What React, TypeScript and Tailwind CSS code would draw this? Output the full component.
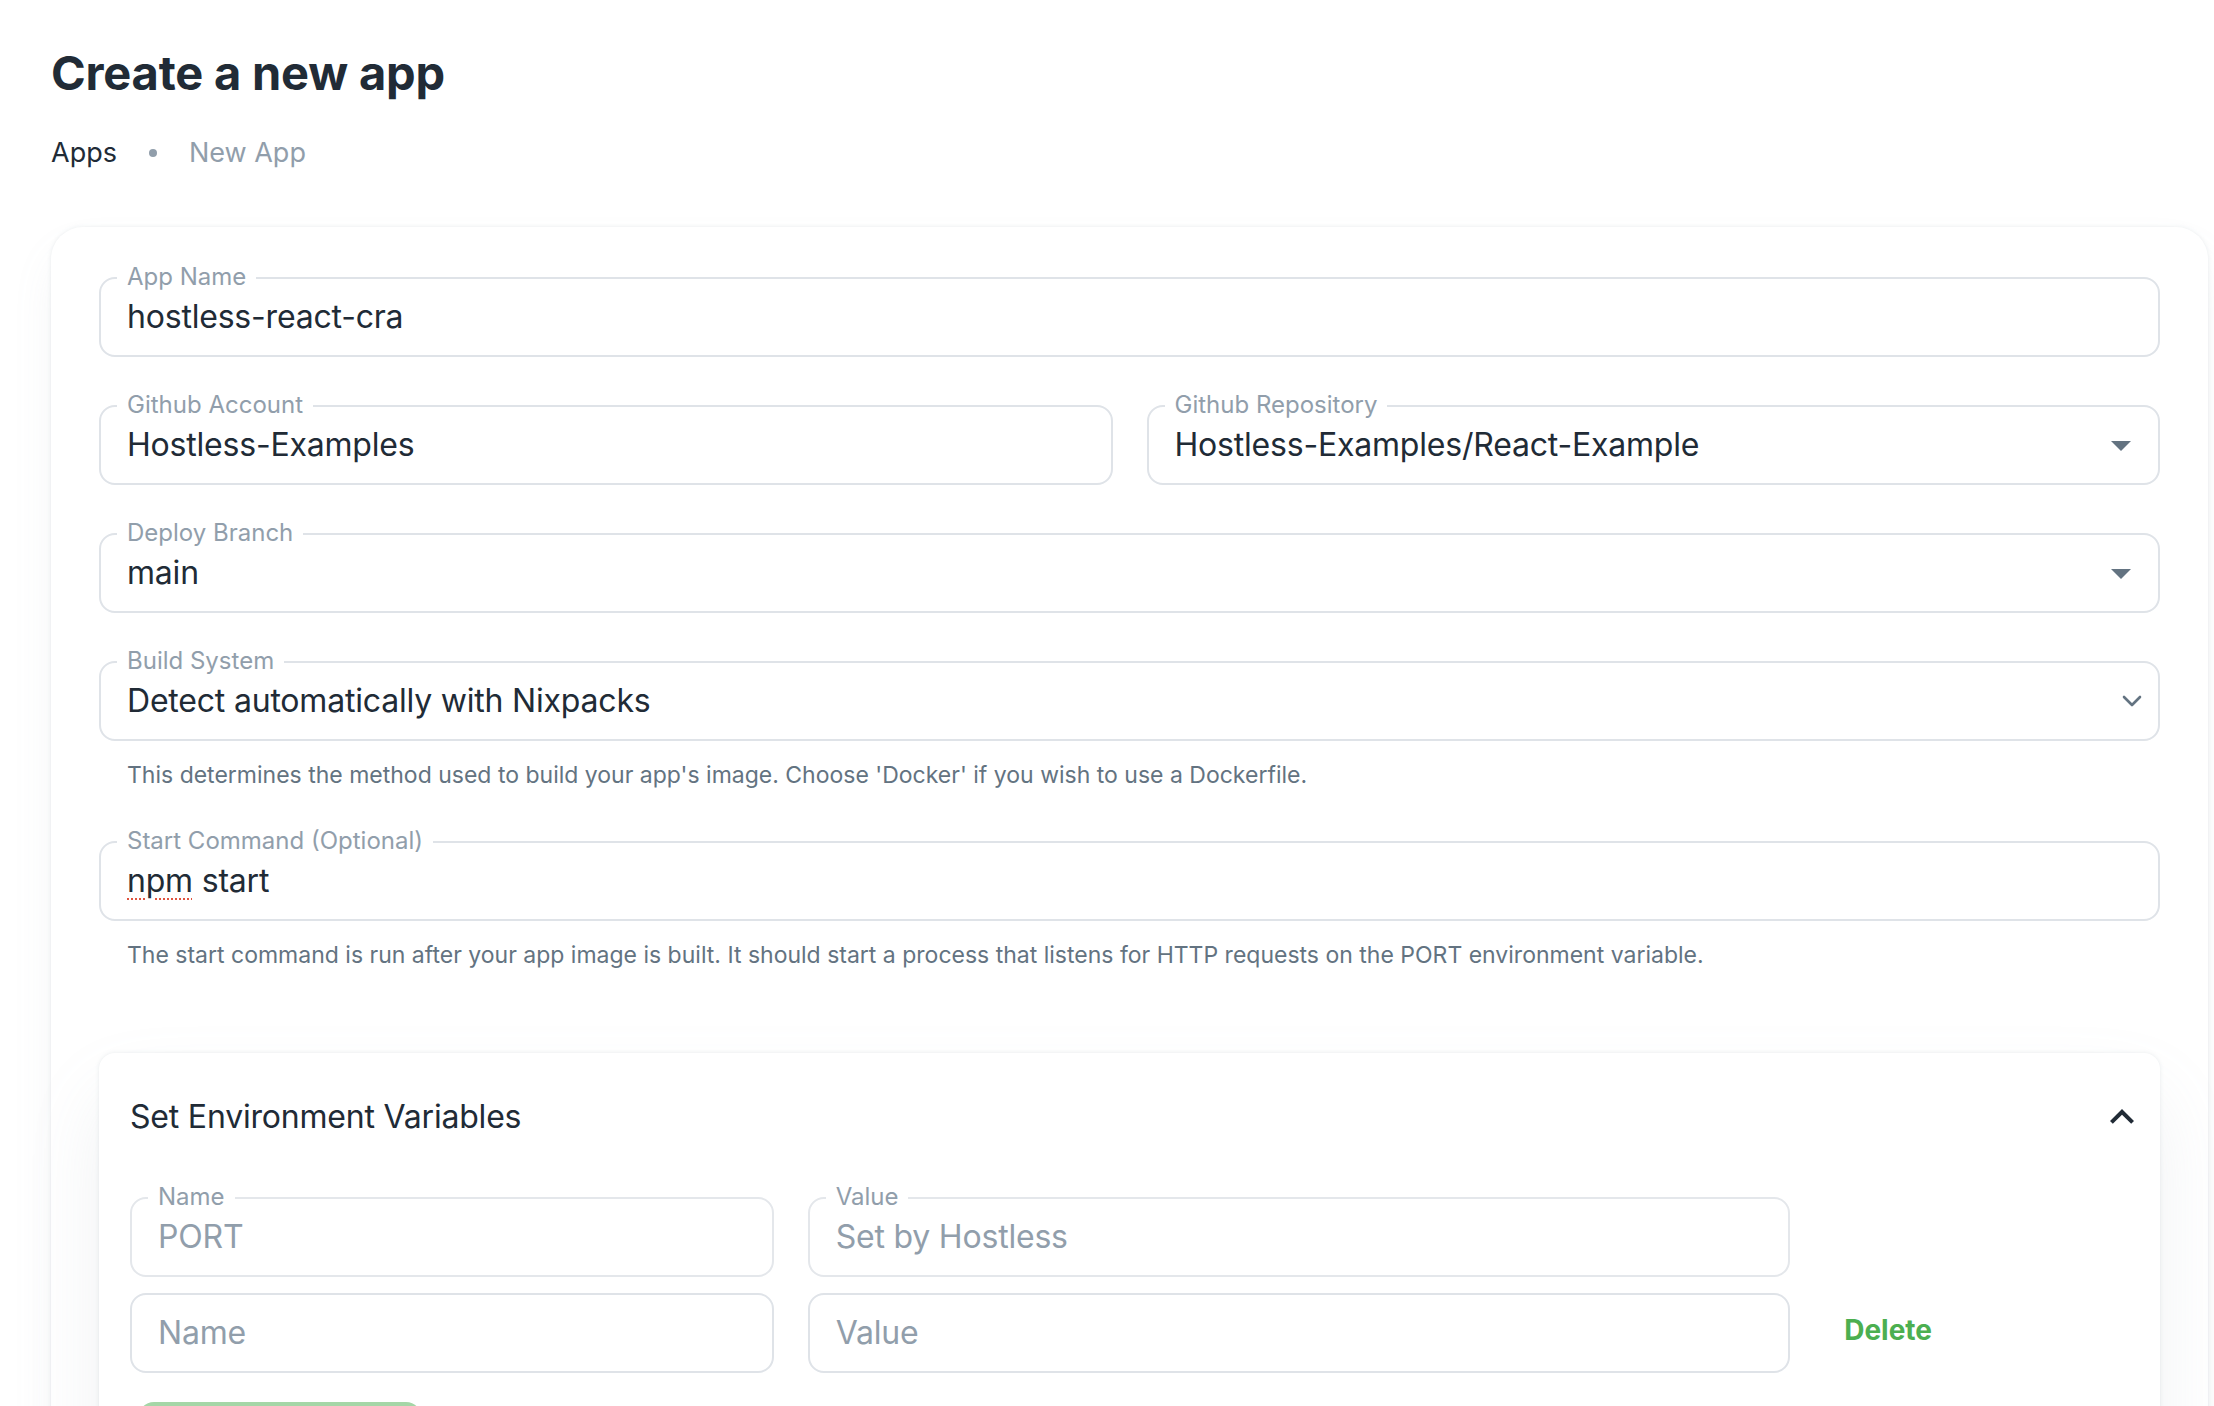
import type { ReactNode } from 'react'

function Field({
  label,
  children,
  right,
  disabled,
}: {
  label?: string
  children: ReactNode
  right?: ReactNode
  disabled?: boolean
}) {
  return (
    <div
      className={`relative flex h-[80px] items-center rounded-[16px] border-2 pl-[26px] ${
        disabled ? 'border-[#e4e7eb]' : 'border-[#dfe3e8]'
      }`}
    >
      {label && (
        <span className="absolute -top-[14px] left-[16px] bg-white px-[10px] text-[24px] leading-[24px] text-[#919eab]">
          {label}
        </span>
      )}
      <div className="min-w-0 flex-1 truncate text-[32px] leading-[48px] tracking-[-0.2px]">{children}</div>
      {right}
    </div>
  )
}

function DropArrow() {
  return (
    <svg width="48" height="48" viewBox="0 0 24 24" className="mr-[13px] shrink-0 fill-[#637381]">
      <path d="M7 10l5 5 5-5z" />
    </svg>
  )
}

function ChevronDown() {
  return (
    <svg width="20" height="12" viewBox="0 0 20 12" className="mr-[16px] shrink-0" fill="none">
      <polyline points="2,2 10,10 18,2" stroke="#637381" strokeWidth="2.6" strokeLinecap="round" strokeLinejoin="round" />
    </svg>
  )
}

export default function App() {
  return (
    <div className="min-h-screen bg-white pl-[51px] pr-[6px] pt-[45px] font-['Inter',sans-serif] text-[#212b36]">
      {/* Header */}
      <h1 className="text-[47px] font-bold leading-[56px] tracking-[-0.2px]">Create a new app</h1>
      <div className="mt-[32px] flex items-center gap-[32px] text-[27px] leading-[40px]">
        <span>Apps</span>
        <span className="h-[8px] w-[8px] rounded-full bg-[#919eab]" />
        <span className="text-[#919eab]">New App</span>
      </div>

      {/* Form card */}
      <div className="mt-[54px] rounded-[32px] bg-white px-[48px] pt-[50px] pb-[48px] shadow-[0_0_4px_0_rgba(145,158,171,0.2),0_24px_48px_-8px_rgba(145,158,171,0.12)]">
        <div className="flex flex-col gap-[48px]">
          <Field label="App Name">hostless-react-cra</Field>

          <div className="grid grid-cols-2 gap-x-[34px]">
            <Field label="Github Account">Hostless-Examples</Field>
            <Field label="Github Repository" right={<DropArrow />}>
              Hostless-Examples/React-Example
            </Field>
          </div>

          <Field label="Deploy Branch" right={<DropArrow />}>
            main
          </Field>

          <div>
            <Field label="Build System" right={<ChevronDown />}>
              Detect automatically with Nixpacks
            </Field>
            <p className="mt-[16px] pl-[28px] text-[23px] leading-[36px] text-[#637381]">
              This determines the method used to build your app's image. Choose 'Docker' if you wish to use a Dockerfile.
            </p>
          </div>

          <div>
            <Field label="Start Command (Optional)">
              <span className="underline decoration-[#e0533f] decoration-dotted decoration-2 underline-offset-[6px]">npm</span> start
            </Field>
            <p className="mt-[16px] pl-[28px] text-[23px] leading-[36px] text-[#637381]">
              The start command is run after your app image is built. It should start a process that listens for HTTP requests on the PORT environment variable.
            </p>
          </div>
        </div>

        {/* Environment variables */}
        <div className="mt-[80px] rounded-[16px] bg-white shadow-[0_0_4px_0_rgba(145,158,171,0.2),0_40px_80px_-8px_rgba(145,158,171,0.16)]">
          <div className="flex h-[128px] items-center justify-between pl-[31px] pr-[14px]">
            <span className="text-[32px] leading-[48px] tracking-[-0.2px]">Set Environment Variables</span>
            <svg width="48" height="48" viewBox="0 0 24 24" className="fill-[#212b36]">
              <path d="M12 8l-6 6 1.41 1.41L12 10.83l4.59 4.58L18 14z" />
            </svg>
          </div>

          <div className="px-[31px] pt-[16px] pb-[40px]">
            <div className="grid grid-cols-12 gap-x-[34px] gap-y-[16px]">
              <div className="col-span-4">
                <Field label="Name" disabled>
                  <span className="text-[#919eab]">PORT</span>
                </Field>
              </div>
              <div className="col-span-6">
                <Field label="Value" disabled>
                  <span className="text-[#919eab]">Set by Hostless</span>
                </Field>
              </div>
              <div className="col-span-2" />

              <div className="col-span-4">
                <Field>
                  <span className="text-[#919eab]">Name</span>
                </Field>
              </div>
              <div className="col-span-6">
                <Field>
                  <span className="text-[#919eab]">Value</span>
                </Field>
              </div>
              <div className="col-span-2 flex items-center pb-[6px]">
                <button className="pl-[20px] text-[28px] font-bold leading-[40px] text-[#4caf50]">Delete</button>
              </div>
            </div>

            <button
              aria-label="Add Variable"
              className="mt-[29px] ml-[8px] block h-[72px] w-[284px] rounded-[16px] bg-[#a5d6a7]"
            />
          </div>
        </div>
      </div>
    </div>
  )
}
